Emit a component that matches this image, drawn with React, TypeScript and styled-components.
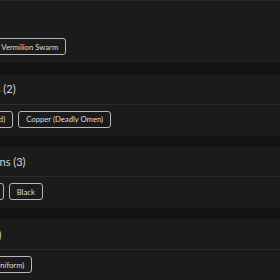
import styled, { createGlobalStyle } from 'styled-components';

const GlobalStyle = createGlobalStyle`
  html, body {
    margin: 0;
    padding: 0;
    background: #121212;
    overflow: hidden;
  }
`;

const Page = styled.div`
  display: flex;
  flex-direction: column;
  gap: 10.7px;
  width: 420px;
  margin-left: -66px;
  border-top: 1px solid #262626;
  font-family: Lato, 'Open Sans', sans-serif;
`;

const Card = styled.section`
  background: #1b1b1b;
`;

const CardHeader = styled.div<{ $plain?: boolean }>`
  height: 30px;
  display: flex;
  align-items: center;
  padding: 0 8px;
  border-bottom: 1px solid ${({ $plain }) => ($plain ? 'transparent' : '#2b2b2b')};
  font-size: 11px;
  color: #d6d6d6;
`;

const TagRow = styled.div`
  display: flex;
  flex-wrap: wrap;
  gap: 5px;
  padding: 6px 8px 8px;
`;

const Tag = styled.button`
  height: 17px;
  padding: 0 7px;
  border: 1px solid #b8b8b8;
  border-radius: 3px;
  background: transparent;
  color: #dedede;
  font-family: inherit;
  font-size: 7.7px;
  cursor: pointer;
`;

const groups: { title: string; items: string[] }[] = [
  { title: 'Hats (2)', items: ['Cinnabar', 'Vermilion Swarm'] },
  { title: 'Fur Patterns (2)', items: ['Bronze (Wicked)', 'Copper (Deadly Omen)'] },
  { title: 'Weapon Skins (3)', items: ['Red', 'Tan', 'Black'] },
  { title: 'Uniforms (1)', items: ['Shadow (Old Uniform)'] },
];

const App = () => {
  return (
    <>
      <GlobalStyle />
      <Page>
        {groups.map((group, index) => (
          <Card key={group.title}>
            <CardHeader $plain={index === 0}>{group.title}</CardHeader>
            <TagRow>
              {group.items.map((item) => (
                <Tag key={item}>{item}</Tag>
              ))}
            </TagRow>
          </Card>
        ))}
      </Page>
    </>
  );
};

export default App;
